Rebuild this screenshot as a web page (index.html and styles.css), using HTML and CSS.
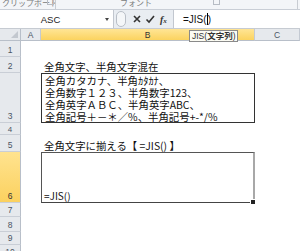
FILE: index.html
```html
<!DOCTYPE html>
<html lang="ja">
<head>
<meta charset="utf-8">
<link rel="stylesheet" href="styles.css">
</head>
<body>
<div class="app">
  <div class="ribbon">
    <div class="grp g1"><span class="glabel">クリップボード</span><span class="launch"></span></div>
    <div class="grp g2"><span class="glabel">フォント</span><span class="launch"></span></div>
  </div>
  <div class="fbar">
    <div class="namebox"><span class="nb-text">ASC</span><span class="nb-arrow"></span></div>
    <div class="fbtns">
      <span class="grip"></span>
      <svg class="ico" width="10" height="10" viewBox="0 0 10 10"><path d="M2 2 L8 8 M8 2 L2 8" stroke="#333" stroke-width="1.6"/></svg>
      <svg class="ico" width="10" height="10" viewBox="0 0 10 10"><path d="M1.5 5.5 L4 8 L9 2" stroke="#333" stroke-width="1.6" fill="none"/></svg>
      <span class="fx">f<small>x</small></span>
    </div>
    <div class="finput"><span class="ftext">=JIS(</span><span class="caret"></span><span class="ftext">)</span></div>
  </div>
  <div class="sheet">
    <div class="row hdr">
      <div class="rh corner"><span class="tri"></span></div>
      <div class="c ca ch">A</div>
      <div class="c cb ch sel">B</div>
      <div class="c cc ch">C</div>
    </div>
    <div class="row r1"><div class="rh">1</div><div class="c ca"></div><div class="c cb"></div><div class="c cc"></div></div>
    <div class="row r2"><div class="rh">2</div><div class="c ca"></div><div class="c cb txt">全角文字、半角文字混在</div><div class="c cc"></div></div>
    <div class="row r3"><div class="rh">3</div><div class="c ca"></div>
      <div class="c cb box">
        <div>全角カタカナ、半角ｶﾀｶﾅ、</div>
        <div>全角数字１２３、半角数字123、</div>
        <div>全角英字ＡＢＣ、半角英字ABC、</div>
        <div>全角記号＋－＊／%、半角記号+-*/%</div>
      </div><div class="c cc"></div></div>
    <div class="row r4"><div class="rh">4</div><div class="c ca"></div><div class="c cb"></div><div class="c cc"></div></div>
    <div class="row r5"><div class="rh">5</div><div class="c ca"></div><div class="c cb txt">全角文字に揃える【&nbsp;=JIS()&nbsp;】</div><div class="c cc"></div></div>
    <div class="row r6"><div class="rh sel">6</div><div class="c ca"></div>
      <div class="c cb active"><span class="atext">=JIS()</span><span class="handle"></span></div><div class="c cc"></div></div>
    <div class="row r7"><div class="rh">7</div><div class="c ca"></div><div class="c cb"></div><div class="c cc"></div></div>
    <div class="row r8"><div class="rh">8</div><div class="c ca"></div><div class="c cb"></div><div class="c cc"></div></div>
    <div class="row r9"><div class="rh">9</div><div class="c ca"></div><div class="c cb"></div><div class="c cc"></div></div>
    <div class="row r10"><div class="rh">10</div><div class="c ca"></div><div class="c cb"></div><div class="c cc"></div></div>
    <div class="tip">JIS(<b>文字列</b>)</div>
  </div>
</div>
</body>
</html>
```
FILE: styles.css
```css
html, body { margin: 0; padding: 0; background: #fff; }
body { width: 300px; height: 251px; overflow: hidden; font-family: "Noto Sans CJK JP", "Noto Sans", sans-serif; }
.app { width: 300px; height: 251px; overflow: hidden; display: flex; flex-direction: column; }

.ribbon { flex: none; height: 9px; background: #f3f5f8; border-bottom: 1px solid #c9ced6; display: flex; overflow: hidden; }
.grp { position: relative; height: 9px; border-right: 1px solid #c8ccd2; overflow: hidden; }
.g1 { width: 55px; }
.g2 { width: 241px; }
.glabel { position: absolute; top: -3px; font-size: 8px; color: #7a7a7a; line-height: 12px; white-space: nowrap; }
.g1 .glabel { left: 2px; }
.g2 .glabel { left: 64px; }
.launch { position: absolute; top: 0; width: 5px; height: 4px; border: 1px solid #b7bcc4; border-top: none; }
.g1 .launch { left: 47px; }
.g2 .launch { left: 157px; }

.fbar { flex: none; height: 18px; display: flex; background: #e9edf2; border-bottom: 1px solid #c6cbd2; }
.namebox { width: 113px; background: #fff; border-right: 1px solid #c2c7cf; position: relative; display: flex; align-items: center; justify-content: center; }
.nb-text { font-family: "Liberation Sans", sans-serif; font-size: 9.5px; color: #222; margin-left: -12px; }
.nb-arrow { position: absolute; right: 4px; top: 8px; width: 0; height: 0; border-left: 2.5px solid transparent; border-right: 2.5px solid transparent; border-top: 3px solid #444; }
.fbtns { width: 59px; display: flex; align-items: center; gap: 3px; padding-left: 2px; box-sizing: border-box; }
.grip { width: 8px; height: 14px; border-radius: 7px; border: 1px solid #b9bfc7; background: #f4f6f8; margin-right: 3px; }
.ico { display: block; }
.fx { font-family: "Liberation Serif", serif; font-style: italic; font-weight: bold; font-size: 10px; color: #333; margin-left: 2px; }
.fx small { font-size: 7px; }
.finput { flex: 1; background: #fff; border-left: 1px solid #c2c7cf; display: flex; align-items: center; padding-left: 9px; }
.ftext { font-family: "Liberation Sans", sans-serif; font-size: 10px; color: #111; }
.caret { width: 1px; height: 12px; background: #000; }

.sheet { position: relative; flex: none; display: flex; flex-direction: column; margin-top: 0; }
.row { display: flex; flex: none; }
.rh { width: 21px; flex: none; background: #e6e9ed; border-right: 1px solid #b8bfc9; border-bottom: 1px solid #c9ced6; font-family: "Liberation Sans", sans-serif; font-size: 8.5px; color: #4a5564; display: flex; align-items: flex-end; justify-content: center; padding-bottom: 1px; box-sizing: border-box; }
.rh.sel { background: linear-gradient(#ffe38f, #fbd15f); color: #333; }
.c { flex: none; box-sizing: border-box; }
.ca { width: 20px; }
.cb { width: 214px; }
.cc { flex: 1; }
.ch { background: #e6e9ed; border-right: 1px solid #c4cad3; border-bottom: 1px solid #b8bfc9; font-family: "Liberation Sans", sans-serif; font-size: 8.5px; color: #4a5564; display: flex; align-items: center; justify-content: center; }
.ch.sel { background: linear-gradient(#ffe595, #fbd35f); color: #333; }
.corner { position: relative; border-bottom: 1px solid #b8bfc9; }
.tri { position: absolute; right: 2px; bottom: 2px; width: 0; height: 0; border-left: 7px solid transparent; border-bottom: 7px solid #c3c8cf; }

.hdr { height: 12px; }
.r1 { height: 16px; }
.r2 { height: 16px; }
.r3 { height: 50px; }
.r4 { height: 12px; }
.r4 .rh { font-size: 8px; padding-bottom: 0; }
.r5 { height: 17px; }
.r6 { height: 51px; }
.r7 { height: 14px; }
.r8 { height: 15px; }
.r9 { height: 13px; }
.r10 { height: 14px; }

.txt { font-size: 10.4px; color: #111; padding-left: 3px; display: flex; align-items: flex-end; line-height: 13px; white-space: nowrap; }
.box { border: 1px solid #333; padding: 1px 0 0 3px; font-size: 10.4px; line-height: 12px; color: #111; white-space: nowrap; }
.active { position: relative; border-top: 1px solid #555; border-left: 1px solid #555; border-bottom: 1px solid #444; border-right: 2px solid #a8a8a8; display: flex; align-items: flex-end; padding-left: 2px; }
.atext { font-size: 10px; line-height: 12px; color: #111; }
.handle { position: absolute; right: -3px; bottom: -3px; width: 4px; height: 4px; background: #222; border: 1px solid #fff; }

.tip { position: absolute; left: 189px; top: 1px; height: 10px; padding: 0 2px; background: #fbfbf3; border: 1px solid #8a8a8a; font-size: 8.5px; line-height: 10px; color: #333; white-space: nowrap; font-family: "Liberation Sans", "Noto Sans CJK JP", sans-serif; }
.tip b { font-weight: bold; }
```
